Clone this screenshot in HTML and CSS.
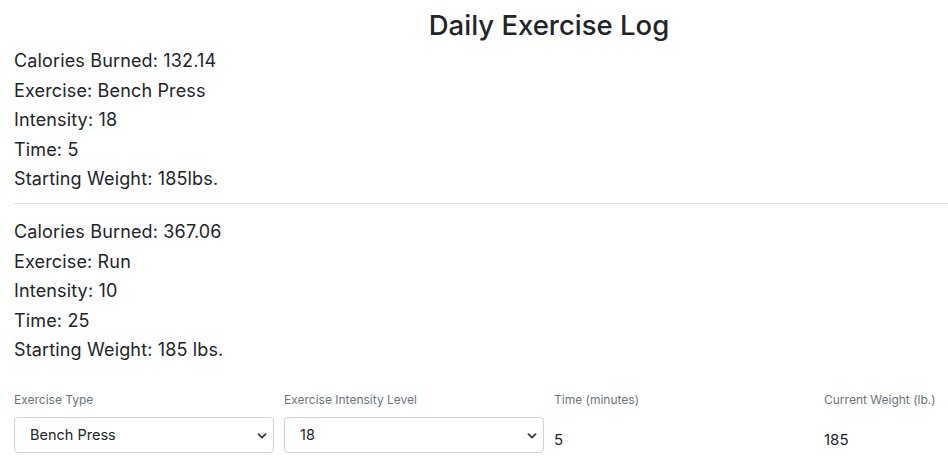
FILE: index.html
```html
<!DOCTYPE html>
<html>
<head>
<meta charset="utf-8">
<link rel="stylesheet" href="styles.css">
</head>
<body>
<div class="page">
  <h1 class="title">Daily Exercise Log</h1>
  <div class="entry">
    <div class="line">Calories Burned: 132.14</div>
    <div class="line">Exercise: Bench Press</div>
    <div class="line">Intensity: 18</div>
    <div class="line">Time: 5</div>
    <div class="line">Starting Weight: 185lbs.</div>
  </div>
  <hr class="divider">
  <div class="entry second">
    <div class="line">Calories Burned: 367.06</div>
    <div class="line">Exercise: Run</div>
    <div class="line">Intensity: 10</div>
    <div class="line">Time: 25</div>
    <div class="line">Starting Weight: 185 lbs.</div>
  </div>
  <div class="form">
    <div class="field">
      <div class="label">Exercise Type</div>
      <div class="select">
        <span>Bench Press</span>
        <svg class="chev" width="10" height="6" viewBox="0 0 10 6"><path d="M1.5 1.2 L5 4.6 L8.5 1.2" fill="none" stroke="#343a40" stroke-width="1.8" stroke-linecap="round" stroke-linejoin="round"/></svg>
      </div>
    </div>
    <div class="field">
      <div class="label">Exercise Intensity Level</div>
      <div class="select">
        <span>18</span>
        <svg class="chev" width="10" height="6" viewBox="0 0 10 6"><path d="M1.5 1.2 L5 4.6 L8.5 1.2" fill="none" stroke="#343a40" stroke-width="1.8" stroke-linecap="round" stroke-linejoin="round"/></svg>
      </div>
    </div>
    <div class="field">
      <div class="label">Time (minutes)</div>
      <div class="value">5</div>
    </div>
    <div class="field">
      <div class="label">Current Weight (lb.)</div>
      <div class="value">185</div>
    </div>
  </div>
</div>
</body>
</html>
```

FILE: styles.css
```css
html, body {
  margin: 0;
  padding: 0;
  background: #ffffff;
  overflow: hidden;
}
body {
  font-family: Inter, "Liberation Sans", Arial, sans-serif;
  color: #212529;
}
.page {
  padding: 8px 0 0 14px;
}
.title {
  margin: 0;
  font-size: 27.5px;
  font-weight: 500;
  line-height: 34px;
  text-align: center;
  padding-left: 136px;
}
.entry {
  margin-top: 4px;
}
.entry.second {
  margin-top: 13px;
}
.line {
  font-size: 18px;
  line-height: 30px;
  height: 29.6px;
  letter-spacing: 0.15px;
}
.divider {
  margin: 9px 0 0 0;
  border: 0;
  border-top: 1px solid #dee2e6;
  height: 0;
}
.form {
  display: grid;
  grid-template-columns: 270px 270px 270px 1fr;
  margin-top: 26px;
}
.label {
  font-size: 12px;
  line-height: 18px;
  color: #6c757d;
  margin-bottom: 8px;
}
.select {
  position: relative;
  box-sizing: border-box;
  width: 260px;
  height: 36px;
  border: 1px solid #ced4da;
  border-radius: 4px;
  padding-left: 15px;
  font-size: 14.5px;
  line-height: 34px;
  color: #212529;
}
.chev {
  position: absolute;
  right: 6px;
  top: 15px;
}
.value {
  font-size: 15px;
  line-height: 36px;
  padding-top: 5px;
}
```
